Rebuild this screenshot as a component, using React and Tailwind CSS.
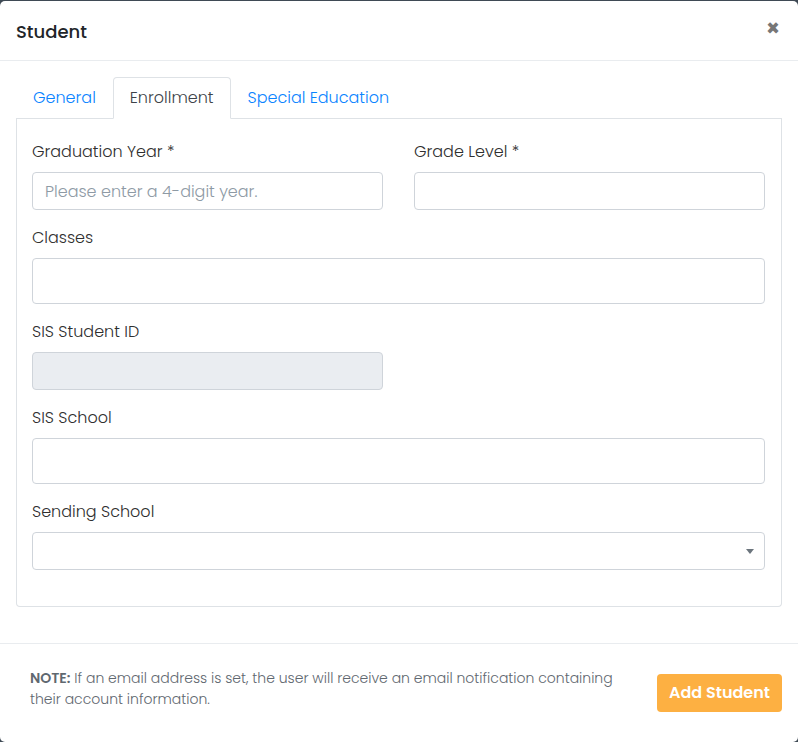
import { useState } from "react";

const font = { fontFamily: "Poppins, 'Open Sans', 'Noto Sans', sans-serif" };

function Field({ label, children }) {
  return (
    <div className="mb-4">
      <label className="block text-[16px] leading-[24px] font-light text-[#2f2f2f] mb-[8px]">{label}</label>
      {children}
    </div>
  );
}

const inputCls =
  "w-full h-[38px] rounded-[4px] border border-[#cfd4da] px-3 text-[16px] font-light text-[#495057] outline-none placeholder:text-[#8e9aa5]";

export default function App() {
  const [tab, setTab] = useState("Enrollment");
  const tabs = ["General", "Enrollment", "Special Education"];

  return (
    <div className="w-[798px] h-[742px] bg-[#3f4a55] pt-px overflow-hidden" style={font}>
      <div className="h-[741px] bg-white rounded-[5px] flex flex-col">
        {/* header */}
        <div className="h-[60px] flex items-center justify-between pl-4 pr-[18px] border-b border-[#e9ecef] shrink-0">
          <h5 className="text-[18px] font-medium text-[#212529] pt-px">Student</h5>
          <button className="text-[22px] font-bold leading-none text-[#777] pb-[3px]">×</button>
        </div>

        {/* body */}
        <div className="px-4 pt-4 flex-1">
          <div className="flex border-b border-[#dee2e6]">
            {tabs.map((t) => (
              <button
                key={t}
                onClick={() => setTab(t)}
                className={
                  t === tab
                    ? "h-[42px] px-4 -mb-px text-[16px] font-light text-[#3d4349] bg-white border border-[#dee2e6] border-b-white rounded-t-[4px]"
                    : "h-[42px] px-4 -mb-px text-[16px] font-light text-[#0a84ff] border border-transparent"
                }
              >
                {t}
              </button>
            ))}
          </div>

          <div className="border border-t-0 border-[#dee2e6] rounded-b-[4px] pl-[15px] pr-4 pt-[21px] pb-5">
            <div className="grid grid-cols-2 gap-x-[31px]">
              <Field label="Graduation Year *">
                <input className={inputCls + " bg-white"} placeholder="Please enter a 4-digit year." />
              </Field>
              <Field label="Grade Level *">
                <input className={inputCls + " bg-white"} />
              </Field>
            </div>

            <Field label="Classes">
              <div className="w-full h-[46px] rounded-[4px] border border-[#cfd4da] bg-white" />
            </Field>

            <div className="grid grid-cols-2 gap-x-[31px]">
              <Field label="SIS Student ID">
                <input className={inputCls + " bg-[#eaedf1]"} disabled />
              </Field>
            </div>

            <Field label="SIS School">
              <div className="w-full h-[46px] rounded-[4px] border border-[#cfd4da] bg-white" />
            </Field>

            <Field label="Sending School">
              <div className="relative w-full h-[38px] rounded-[4px] border border-[#cfd4da] bg-white">
                <svg className="absolute right-[10px] top-[16px]" width="8" height="5" viewBox="0 0 8 5">
                  <path d="M0 0h8L4 5z" fill="#6c757d" />
                </svg>
              </div>
            </Field>
          </div>
        </div>

        {/* footer */}
        <div className="h-[99px] border-t border-[#e9ecef] flex items-center justify-between pl-[30px] pr-4 shrink-0">
          <p className="text-[14px] leading-[21px] font-light text-[#5f6870] w-[600px] mb-2">
            <b className="font-semibold">NOTE:</b> If an email address is set, the user will receive an email notification containing their account information.
          </p>
          <button className="h-[38px] px-3 rounded-[4px] bg-[#fdb042] text-white text-[16px] font-semibold">
            Add Student
          </button>
        </div>
      </div>
    </div>
  );
}
